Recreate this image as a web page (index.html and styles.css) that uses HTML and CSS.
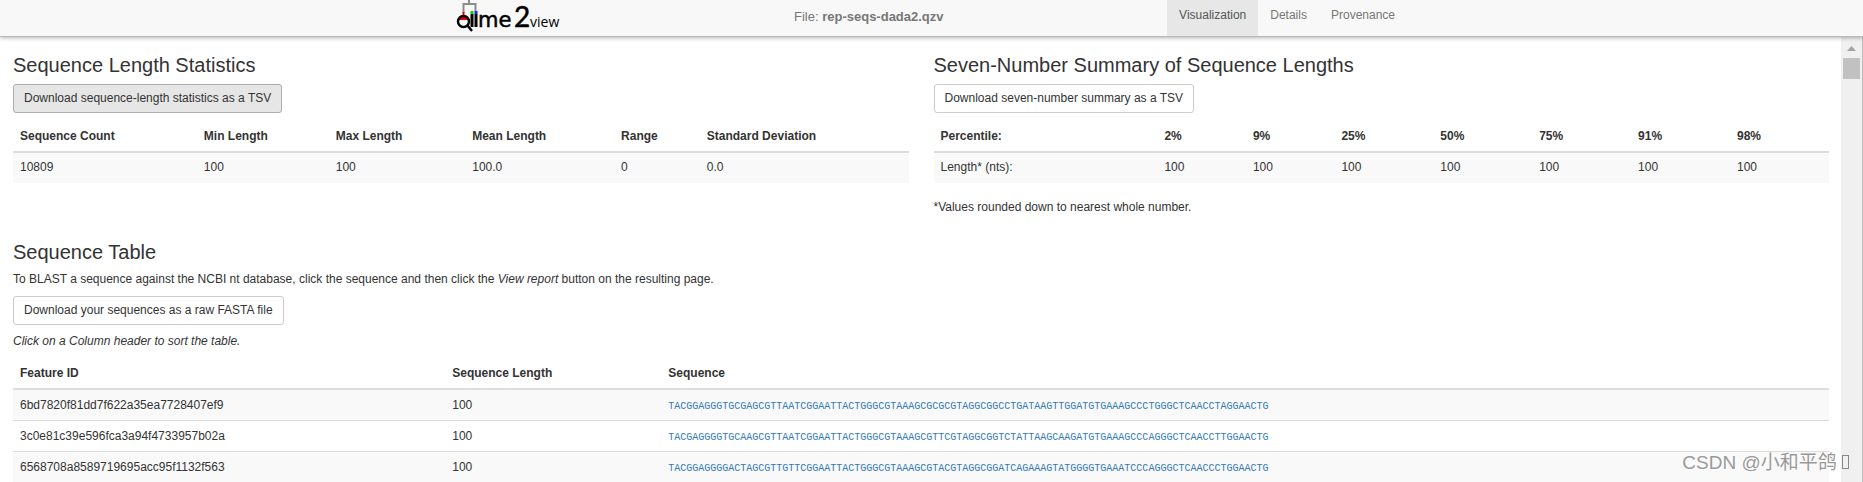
FILE: index.html
```html
<!DOCTYPE html>
<html lang="en">
<head>
<meta charset="utf-8">
<title>QIIME 2 View</title>
<link rel="stylesheet" href="styles.css">
</head>
<body>
<header class="navbar">
  <div class="navbar-inner">
    <a class="brand" href="#" aria-label="QIIME 2 View">
      <svg class="logo" width="106" height="34" viewBox="0 0 106 34" aria-hidden="true">
        <path d="M13 0V4M7.500 13V4H19.500V11" fill="none" stroke="#8c8c8c" stroke-width="2"/>
        <path d="M2.500 20a5 5 0 0 1 10 0z" fill="#e00"/>
        <path d="M7.500 12v4" stroke="#e00" stroke-width="2"/>
        <circle cx="7.500" cy="21.500" r="5.500" fill="none" stroke="#000" stroke-width="2.500"/>
        <path d="M11 25l5 6" stroke="#000" stroke-width="2.500"/>
        <path d="M16 14v13M20 14v13" stroke="#000" stroke-width="3"/>
        <path d="M16 11v3" stroke="#0d0" stroke-width="3"/>
        <path d="M20 11v3" stroke="#22f" stroke-width="3"/>
        <text class="logo-me" x="22" y="27">me</text>
        <text class="logo-two" x="58" y="27">2</text>
        <text class="logo-view" x="74" y="27">view</text>
      </svg>
    </a>
    <p class="file">File: <strong>rep-seqs-dada2.qzv</strong></p>
    <nav class="tabs">
      <a class="tab tab-active" href="#">Visualization</a>
      <a class="tab" href="#">Details</a>
      <a class="tab" href="#">Provenance</a>
    </nav>
  </div>
</header>
<div class="viewport">
  <main class="content">
    <div class="summary">
      <section>
        <h1 class="title">Sequence Length Statistics</h1>
        <button class="btn btn-active" type="button">Download sequence-length statistics as a TSV</button>
        <table class="table">
          <thead>
            <tr><th>Sequence Count</th><th>Min Length</th><th>Max Length</th><th>Mean Length</th><th>Range</th><th>Standard Deviation</th></tr>
          </thead>
          <tbody>
            <tr><td>10809</td><td>100</td><td>100</td><td>100.0</td><td>0</td><td>0.0</td></tr>
          </tbody>
        </table>
      </section>
      <section>
        <h1 class="title">Seven-Number Summary of Sequence Lengths</h1>
        <button class="btn" type="button">Download seven-number summary as a TSV</button>
        <table class="table">
          <thead>
            <tr><th class="col-label">Percentile:</th><th>2%</th><th>9%</th><th>25%</th><th>50%</th><th>75%</th><th>91%</th><th>98%</th></tr>
          </thead>
          <tbody>
            <tr><td>Length* (nts):</td><td>100</td><td>100</td><td>100</td><td>100</td><td>100</td><td>100</td><td>100</td></tr>
          </tbody>
        </table>
        <p class="note">*Values rounded down to nearest whole number.</p>
      </section>
    </div>
    <section class="sequences">
      <h1 class="title">Sequence Table</h1>
      <p class="text">To BLAST a sequence against the NCBI nt database, click the sequence and then click the <em>View report</em> button on the resulting page.</p>
      <button class="btn" type="button">Download your sequences as a raw FASTA file</button>
      <p class="text hint"><em>Click on a Column header to sort the table.</em></p>
      <table class="table">
        <thead>
          <tr><th class="col-id">Feature ID</th><th class="col-length">Sequence Length</th><th>Sequence</th></tr>
        </thead>
        <tbody>
          <tr><td>6bd7820f81dd7f622a35ea7728407ef9</td><td>100</td><td><a class="seq" href="#">TACGGAGGGTGCGAGCGTTAATCGGAATTACTGGGCGTAAAGCGCGCGTAGGCGGCCTGATAAGTTGGATGTGAAAGCCCTGGGCTCAACCTAGGAACTG</a></td></tr>
          <tr><td>3c0e81c39e596fca3a94f4733957b02a</td><td>100</td><td><a class="seq" href="#">TACGAGGGGTGCAAGCGTTAATCGGAATTACTGGGCGTAAAGCGTTCGTAGGCGGTCTATTAAGCAAGATGTGAAAGCCCAGGGCTCAACCTTGGAACTG</a></td></tr>
          <tr><td>6568708a8589719695acc95f1132f563</td><td>100</td><td><a class="seq" href="#">TACGGAGGGGACTAGCGTTGTTCGGAATTACTGGGCGTAAAGCGTACGTAGGCGGATCAGAAAGTATGGGGTGAAATCCCAGGGCTCAACCCTGGAACTG</a></td></tr>
        </tbody>
      </table>
    </section>
  </main>
  <div class="scrollbar" aria-hidden="true">
    <svg class="scroll-arrow" width="9" height="5" viewBox="0 0 9 5"><path d="M0 5L4.500 0L9 5z" fill="#a3a3a3"/></svg>
    <div class="scroll-thumb"></div>
  </div>
</div>
<div class="watermark">CSDN @小和平鸽 <span class="missing-glyph"></span></div>
</body>
</html>
```

FILE: styles.css
```css
* {
  box-sizing: border-box;
}

body {
  display: flex;
  flex-direction: column;
  height: 100vh;
  margin: 0;
  overflow: hidden;
  background: #fff;
  color: #333;
  font-family: "Liberation Sans", Arial, sans-serif;
  font-size: 12px;
  line-height: 18px;
}

.navbar {
  position: relative;
  z-index: 1;
  flex: none;
  background: #f8f8f8;
  border-bottom: 1px solid #bbb;
  box-shadow: 0 1px 4px rgba(0, 0, 0, 0.3);
}

.navbar-inner {
  display: grid;
  grid-template-columns: 338px 1fr auto;
  max-width: 951px;
  height: 36px;
  margin: 0 auto;
}

.logo {
  display: block;
}

.logo-me {
  font: 21px "DejaVu Sans", sans-serif;
  stroke: #000;
  stroke-width: 0.5px;
}

.logo-two {
  font: 28px Lato, sans-serif;
  stroke: #000;
  stroke-width: 0.5px;
}

.logo-view {
  font: 14px "Open Sans", sans-serif;
}

.file {
  margin: 0;
  padding-top: 8px;
  color: #777;
  font-size: 13px;
}

.tabs {
  display: flex;
}

.tab {
  padding: 6px 12px 0;
  color: #777;
  text-decoration: none;
}

.tab-active {
  background: #e7e7e7;
  color: #555;
}

.viewport {
  display: flex;
  flex: 1;
  min-height: 0;
  border-right: 1px solid #bbb;
}

.content {
  flex: 1;
  min-width: 0;
  padding: 17px 12px 0 13px;
  overflow: hidden;
}

.summary {
  display: grid;
  grid-template-columns: 1fr 1fr;
  gap: 25px;
}

.title {
  margin: 0 0 8px;
  font-size: 20px;
  font-weight: normal;
  line-height: 22px;
}

.sequences .title {
  margin-bottom: 7px;
}

.btn {
  display: block;
  padding: 5px 10px;
  background: #fff;
  border: 1px solid #ccc;
  border-radius: 3px;
  color: #333;
  font: inherit;
  line-height: 17px;
}

.btn-active {
  background: #e6e6e6;
  border-color: #adadad;
}

.table {
  width: 100%;
  margin-top: 8px;
  border-spacing: 0;
}

.table th,
.table td {
  padding: 6px 7px;
  text-align: left;
}

.summary td {
  padding: 5px 7px 7px;
}

.table th {
  border-bottom: 2px solid #ddd;
}

.table tbody tr:nth-child(odd) {
  background: #f9f9f9;
}

.table tbody tr + tr td {
  border-top: 1px solid #ddd;
}

.col-label {
  width: 25%;
}

.col-id {
  width: 23.8%;
}

.col-length {
  width: 11.9%;
}

.note {
  margin: 15px 0 0;
}

.sequences {
  margin-top: 25px;
}

.text {
  margin: 0 0 8px;
}

.hint {
  margin: 7px 0 8px;
}

.seq {
  color: #337ab7;
  font-family: "Liberation Mono", monospace;
  font-size: 10px;
  line-height: 14px;
  text-decoration: none;
}

.scrollbar {
  display: flex;
  flex: none;
  flex-direction: column;
  align-items: center;
  gap: 7px;
  width: 21px;
  padding-top: 9px;
  background: #f0f0f0;
}

.scroll-thumb {
  width: 17px;
  height: 21px;
  background: #c1c1c1;
}

.watermark {
  position: absolute;
  right: 14px;
  bottom: 4px;
  z-index: 2;
  color: #999;
  font-family: "Liberation Sans", "Noto Sans CJK SC", sans-serif;
  font-size: 19px;
  line-height: 30px;
  text-shadow: 1px 1px 0 #fff;
}

.missing-glyph {
  display: inline-block;
  width: 7px;
  height: 14px;
  border: 1px solid #888;
}
```
